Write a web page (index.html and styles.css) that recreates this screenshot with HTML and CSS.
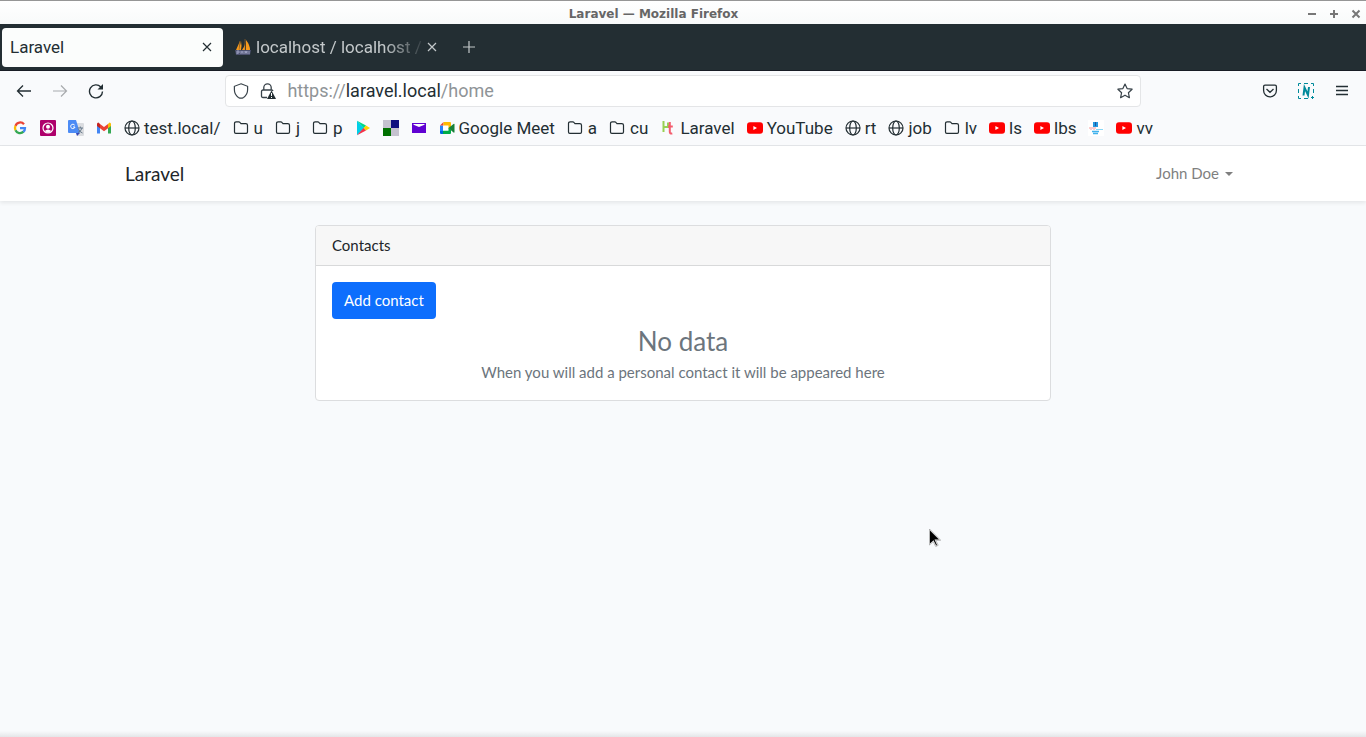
FILE: index.html
```html
<!DOCTYPE html>
<html lang="en">
<head>
<meta charset="utf-8">
<title>Laravel</title>
<link rel="stylesheet" href="styles.css">
</head>
<body>
<svg class="defs" aria-hidden="true">
  <symbol id="folder" viewBox="0 0 16 16"><path d="M1.500 3.500q0-1.700 1.700-1.700h2.600q.7 0 1.100.5l1.100 1.300h4.800q1.700 0 1.700 1.700v6.800q0 1.300-1.300 1.300H2.800q-1.300 0-1.300-1.300z" fill="none" stroke="#232e33" stroke-width="1.200"/></symbol>
  <symbol id="globe" viewBox="0 0 16 16"><g fill="none" stroke="#232e33" stroke-width="1.200"><circle cx="8" cy="8" r="7"/><ellipse cx="8" cy="8" rx="3.300" ry="7"/><path d="M1 8h14"/></g></symbol>
  <symbol id="youtube" viewBox="0 0 16 16"><rect y="2.200" width="16" height="11.500" rx="3" fill="#f00"/><path d="M6.400 6v4L10 8z" fill="#fff"/></symbol>
  <symbol id="close" viewBox="0 0 16 16"><path d="M4 4l8 8M12 4l-8 8" fill="none" stroke="currentColor" stroke-width="1.200"/></symbol>
</svg>

<header class="browser">
  <div class="titlebar">
    <span class="window-title">Laravel — Mozilla Firefox</span>
    <div class="window-controls">
      <button class="window-button" aria-label="Minimize"><svg viewBox="0 0 10 10"><path d="M1 5h8"/></svg></button>
      <button class="window-button" aria-label="Maximize"><svg viewBox="0 0 10 10"><path d="M1 5h8M5 1v8"/></svg></button>
      <button class="window-button" aria-label="Close window"><svg viewBox="0 0 10 10"><path d="M1.500 1.500l7 7M8.500 1.500l-7 7"/></svg></button>
    </div>
  </div>

  <div class="tabs">
    <div class="tab tab-active">
      <span class="tab-title">Laravel</span>
      <button class="icon-button" aria-label="Close tab"><svg class="icon"><use href="#close"/></svg></button>
    </div>
    <div class="tab">
      <svg class="icon" viewBox="0 0 16 16"><path d="M5 2L1 11h3zM6 2q1 5 0 9H4zM10 0q1 6-3 11h3zM11 1q4 5 4 10h-4z" fill="#f79a1c"/><path d="M10 0v11M5 2l-1 9" stroke="#a56a25" stroke-width=".6"/><path d="M0 11h16l-1 5H1z" fill="#4d5270"/><path d="M2 15v-3h2v2H2M6 15v-3M6 13h2M8 12v3M10 15v-3l1 2 1-2v3M14 12v3" stroke="#aeb2d4" stroke-width=".8" fill="none"/></svg>
      <span class="tab-title tab-title-fade">localhost / localhost /</span>
      <button class="icon-button" aria-label="Close tab"><svg class="icon"><use href="#close"/></svg></button>
    </div>
    <button class="icon-button new-tab" aria-label="New tab"><svg class="icon" viewBox="0 0 16 16"><path d="M8 2v12M2 8h12" stroke="currentColor" stroke-width="1.200"/></svg></button>
  </div>

  <div class="toolbar">
    <div class="tools">
      <button class="icon-button" aria-label="Back"><svg class="icon" viewBox="0 0 16 16"><path d="M15 8H1.500M7 2.500L1.500 8 7 13.500" fill="none" stroke="#232e33" stroke-width="1.300"/></svg></button>
      <button class="icon-button" aria-label="Forward" disabled><svg class="icon" viewBox="0 0 16 16"><path d="M1 8h13.500M9 2.500L14.500 8 9 13.500" fill="none" stroke="#a8aaad" stroke-width="1.200"/></svg></button>
      <button class="icon-button" aria-label="Reload"><svg class="icon" viewBox="0 0 16 16"><path d="M12.800 4A6.500 6.500 0 1 0 14.500 8.500" fill="none" stroke="#232e33" stroke-width="1.400"/><path d="M15 1v5.500H9.500z" fill="#232e33"/></svg></button>
    </div>
    <div class="address">
      <svg class="icon" viewBox="0 0 16 16"><path d="M8 .8l6.600 2.500v3.500q0 5-4 7.600Q8 16 5.400 14.400q-4-2.600-4-7.600V3.300z" fill="none" stroke="#39434a" stroke-width="1.200"/></svg>
      <svg class="icon lock" viewBox="0 0 16 16"><path d="M3.800 7V4.500a3.700 3.700 0 0 1 7.400 0V7M7 14.500H3q-1.500 0-1.500-1.500V8.500Q1.500 7 3 7h8.500q1 0 1.500 1" fill="none" stroke="#39434a" stroke-width="1.300"/><path d="M11.500 7.500L16 16H7z" fill="#232e33"/><path d="M11.500 10v3M11.500 14v1" stroke="#fff"/></svg>
      <div class="url" role="textbox" contenteditable="true" spellcheck="false" aria-label="Address">https://<span class="host">laravel.local</span>/home</div>
      <button class="icon-button" aria-label="Bookmark this page"><svg class="icon" viewBox="0 0 16 16"><path d="M8 1l2.100 4.600 5 .6-3.700 3.500 1 5L8 12.200 3.600 14.700l1-5L.9 6.200l5-.6z" fill="none" stroke="#39434a" stroke-width="1.200" stroke-linejoin="round"/></svg></button>
    </div>
    <div class="tools tools-end">
      <button class="icon-button" aria-label="Save to Pocket"><svg class="icon" viewBox="0 0 16 16"><path d="M3 2.200h10q1.400 0 1.400 1.400V7.500a6.400 6.400 0 0 1-12.800 0V3.600Q1.600 2.200 3 2.200zM4.500 6L8 9.300 11.500 6" fill="none" stroke="#232e33" stroke-width="1.300"/></svg></button>
      <button class="icon-button" aria-label="Screenshot extension"><svg class="icon" viewBox="0 0 16 16"><path d="M.5 3V.5H3M6 .5h4M13 .5h2.500V3M15.500 6v4M.5 6v4M.5 13v2.500H3M6 15.500h4M14.500 13v3M13 14.500h3" fill="none" stroke="#008a9b"/><path d="M5.500 12.500l1-8 3.500 7.500 1-8" fill="none" stroke="#008a9b" stroke-width="2"/></svg></button>
      <button class="icon-button" aria-label="Menu"><svg class="icon" viewBox="0 0 16 16"><path d="M2 3.500h12M2 7.500h12M2 11.500h12" stroke="#232e33" stroke-width="1.300"/></svg></button>
    </div>
  </div>

  <nav class="bookmarks" aria-label="Bookmarks">
    <a class="bookmark" href="#" aria-label="Google"><svg class="icon" viewBox="0 0 16 16"><g fill="none" stroke-width="2.300"><path d="M12 4.200A5 5 0 0 0 3.500 5.800" stroke="#ea4335"/><path d="M3.500 5.800a5 5 0 0 0 0 4.400" stroke="#fbbc05"/><path d="M3.500 10.200a5 5 0 0 0 8 1.500" stroke="#34a853"/><path d="M11.300 11.900A4.800 4.800 0 0 0 13 8.100H8" stroke="#4285f4"/></g></svg></a>
    <a class="bookmark" href="#" aria-label="Account"><svg class="icon" viewBox="0 0 16 16"><rect width="16" height="16" rx="1" fill="#ae006b"/><circle cx="8" cy="8" r="5" fill="none" stroke="#fff" stroke-width="1.200"/><circle cx="8" cy="6.800" r="2" fill="#fff"/><path d="M4.700 11q3.300-3 6.600 0L8 13z" fill="#fff"/></svg></a>
    <a class="bookmark" href="#" aria-label="Translate"><svg class="icon" viewBox="0 0 16 16"><path d="M6 3h9q1 0 1 1v11q0 1-1 1H9z" fill="#dadce0"/><path d="M1 0h7l4 13H1q-1 0-1-1V1q0-1 1-1z" fill="#4c8bf5"/><path d="M8 13h4l-3 3z" fill="#3447b8"/><path d="M6.700 5.200A2.200 2.200 0 1 0 7 7H5" fill="none" stroke="#fff"/><path d="M9.500 8H15M12.300 6.500V8M14 8q-1 3.500-4 4.500M10.500 9q1 3 4 4" stroke="#66788a" fill="none"/></svg></a>
    <a class="bookmark" href="#" aria-label="Gmail"><svg class="icon" viewBox="0 0 16 16"><path d="M1 4v9.500h3V6z" fill="#4285f4"/><path d="M12 6v7.500h3V4z" fill="#34a853"/><path d="M4 4l4 3 4-3v4.300L8 11.300 4 8.300z" fill="#ea4335"/><path d="M1 4q0-1.500 1.500-1.500L4 4v4.300L1 6z" fill="#c5221f"/><path d="M15 4q0-1.500-1.500-1.500L12 4v4.300L15 6z" fill="#fbbc04"/></svg></a>
    <a class="bookmark" href="#"><svg class="icon"><use href="#globe"/></svg>test.local/</a>
    <a class="bookmark folder" href="#"><svg class="icon"><use href="#folder"/></svg>u</a>
    <a class="bookmark folder" href="#"><svg class="icon"><use href="#folder"/></svg>j</a>
    <a class="bookmark folder" href="#"><svg class="icon"><use href="#folder"/></svg>p</a>
    <a class="bookmark" href="#" aria-label="Google Play"><svg class="icon" viewBox="0 0 16 16"><path d="M2 .8v14.400L9.500 8z" fill="#00cfe8"/><path d="M2 .8L11 5.500 9 8z" fill="#00d986"/><path d="M11 5.500L15 8l-4 2.500L8.500 8z" fill="#ffd500"/><path d="M2 15.200L8.500 8l2.500 2.500z" fill="#f43249"/></svg></a>
    <a class="bookmark" href="#" aria-label="Palette"><svg class="icon" viewBox="0 0 16 16"><path d="M0 0h16v16H0z" fill="#c5c2cf"/><path d="M8 0h8v8H8z" fill="#10107f"/><path d="M0 8h8v8H0z" fill="#007000"/></svg></a>
    <a class="bookmark" href="#" aria-label="Mail"><svg class="icon" viewBox="0 0 16 16"><path d="M1 3h14v10H1z" fill="#6001d2"/><path d="M2.500 4h11v.8L8 7 2.500 4.800z" fill="#fff"/></svg></a>
    <a class="bookmark" href="#"><svg class="icon" viewBox="0 0 16 16"><path d="M4 5h6v6H4z" fill="#fff"/><path d="M1 5.500h3v5.500H1z" fill="#2684fc"/><path d="M1 5.500L4.500 2v3.500z" fill="#ea4335"/><path d="M4.500 2H11q1 0 1 1v4.500L9.500 9V5.500h-5z" fill="#ffba00"/><path d="M1 11h3.500v3H2q-1 0-1-1z" fill="#0066da"/><path d="M4 10.800h5.500V8L12 9.500V13q0 1-1 1H4z" fill="#00ac47"/><path d="M9.500 8l5-4q1-.5 1 .5v7.500q0 1-1 .5z" fill="#188038"/></svg>Google Meet</a>
    <a class="bookmark folder" href="#"><svg class="icon"><use href="#folder"/></svg>a</a>
    <a class="bookmark folder" href="#"><svg class="icon"><use href="#folder"/></svg>cu</a>
    <a class="bookmark" href="#"><svg class="icon" viewBox="0 0 16 16"><path d="M3.500 1v11M3.500 7H8V2.500" fill="none" stroke="#98d052" stroke-width="2"/><path d="M9.800 2v10q0 2 2.500 1.500M8 6.500h4.800" fill="none" stroke="#f45d6e" stroke-width="2"/></svg>Laravel</a>
    <a class="bookmark" href="#"><svg class="icon"><use href="#youtube"/></svg>YouTube</a>
    <a class="bookmark" href="#"><svg class="icon"><use href="#globe"/></svg>rt</a>
    <a class="bookmark" href="#"><svg class="icon"><use href="#globe"/></svg>job</a>
    <a class="bookmark folder" href="#"><svg class="icon"><use href="#folder"/></svg>lv</a>
    <a class="bookmark" href="#"><svg class="icon"><use href="#youtube"/></svg>ls</a>
    <a class="bookmark" href="#"><svg class="icon"><use href="#youtube"/></svg>lbs</a>
    <a class="bookmark" href="#" aria-label="Help"><svg class="icon" viewBox="0 0 16 16"><path d="M0 0h16v16H0z" fill="#fff"/><path d="M5 2h5v5H5z" fill="#2599df"/><path d="M7 2h1v4H7z" fill="#1c57a0"/><path d="M1 8h7M3 9v1M6 9v1" stroke="#f59a9a"/><path d="M8 9.500h7" stroke="#87d8f8"/><path d="M4 11.500h7M5 13.500h5" stroke="#40b2ed" stroke-width="1.500"/></svg></a>
    <a class="bookmark" href="#"><svg class="icon"><use href="#youtube"/></svg>vv</a>
  </nav>
</header>

<div class="page">
  <nav class="navbar">
    <div class="container">
      <a class="brand" href="#">Laravel</a>
      <button class="user-menu" aria-haspopup="true">John Doe<span class="caret"></span></button>
    </div>
  </nav>
  <main class="content">
    <section class="card">
      <div class="card-header">Contacts</div>
      <div class="card-body">
        <button class="primary-button">Add contact</button>
        <div class="empty">
          <h1 class="empty-title">No data</h1>
          <p class="empty-text">When you will add a personal contact it will be appeared here</p>
        </div>
      </div>
    </section>
  </main>
</div>
<svg class="pointer" viewBox="0 0 12 20" aria-hidden="true"><path d="M.5 1v16l3.700-3.500 2.500 5 2.500-1.200-2.500-5h5z" fill="#fff" stroke="#999" stroke-width=".7"/><path d="M1 2.500v13l3.500-3.200 2.700 5.200.8-.4L5.500 11.500H10z" fill="#000"/></svg>
</body>
</html>
```

FILE: styles.css
```css
* { box-sizing: border-box; }

body {
  margin: 0;
  min-height: 100vh;
  display: flex;
  flex-direction: column;
  background: #f8fafc;
  color: #212529;
  font-family: Roboto, "Liberation Sans", sans-serif;
}

button {
  border: 0;
  padding: 0;
  background: none;
  color: inherit;
  font: inherit;
}

a { color: inherit; text-decoration: none; }

.defs { display: none; }

.icon {
  display: block;
  flex: none;
  width: 16px;
  height: 16px;
}

.icon-button { flex: none; }

.browser { background: #f9fafc; color: #232e33; }

/* Window title */
.titlebar {
  display: flex;
  align-items: center;
  height: 24px;
  padding: 2px 5px 0 0;
  border-top: 1px solid #969696;
  background: linear-gradient(#fff, #f8fafa);
}

.window-title {
  flex: 1;
  color: #666;
  font: bold 12px/20px "DejaVu Sans", sans-serif;
  text-align: center;
}

.window-controls {
  display: flex;
  gap: 12px;
}

.window-button svg {
  display: block;
  width: 10px;
  height: 10px;
  fill: none;
  stroke: #777;
  stroke-width: 2;
}

/* Tabs */
.tabs {
  display: flex;
  align-items: center;
  gap: 4px;
  height: 47px;
  padding: 0 2px;
  border-bottom: 1px solid #181c25;
  background: #232e33;
  color: #c3c8ca;
}

.tab {
  display: flex;
  align-items: center;
  gap: 5px;
  width: 221px;
  height: 39px;
  padding: 0 8px;
  font-size: 17px;
}

.tab-active {
  border-radius: 4px;
  background: #fbfdfc;
  color: #232e33;
}

.tab-title {
  flex: 1;
  white-space: nowrap;
}

.tab-title-fade {
  min-width: 0;
  margin-right: -8px;
  -webkit-mask-image: linear-gradient(to right, #000 75%, transparent);
  mask-image: linear-gradient(to right, #000 75%, transparent);
}

.new-tab { padding: 0 9px; }

/* Navigation toolbar */
.toolbar {
  display: grid;
  grid-template-columns: 1fr 67% 1fr;
  align-items: center;
  height: 40px;
}

.tools { display: flex; gap: 20px; padding: 0 16px; }
.tools-end { justify-content: flex-end; }

.address {
  display: flex;
  align-items: center;
  height: 32px;
  padding: 0 7px;
  border: 1px solid #e4e5e7;
  border-radius: 4px;
  background: #fff;
}

.lock { margin: 0 11px; }

.url {
  flex: 1;
  outline: 0;
  color: #8f9497;
  font-size: 18px;
  line-height: 24px;
}

.host { color: #232e33; }

/* Bookmarks */
.bookmarks {
  display: flex;
  gap: 12px;
  height: 35px;
  padding: 0 12px;
  border-bottom: 1px solid #e4e6e9;
}

.bookmark {
  display: flex;
  align-items: center;
  gap: 4px;
  font-size: 17px;
  white-space: nowrap;
}

.folder { gap: 5px; }

/* Application */
.page {
  flex: 1;
  background: linear-gradient(to top, #e4e6e8, #f8fafc 6px);
  font-family: Lato, sans-serif;
  font-size: 15px;
  line-height: 23px;
}

.navbar {
  background: #fff;
  box-shadow: 0 2px 4px rgba(0, 0, 0, .08);
}

.container {
  display: flex;
  align-items: center;
  justify-content: space-between;
  max-width: 1140px;
  height: 55px;
  margin: 0 auto;
  padding: 0 12px;
}

.brand { font-size: 19px; }
.user-menu { display: flex; align-items: center; padding: 0 8px; color: #7f7f7f; }

.caret {
  margin-left: 6px;
  border: 4px solid transparent;
  border-top-color: currentColor;
  border-bottom: 0;
}

.content { padding: 24px 12px; }

.card {
  max-width: 736px;
  margin: 0 auto;
  border: 1px solid #dcdddf;
  border-radius: 4px;
  background: #fff;
}

.card-header {
  padding: 8px 16px;
  border-bottom: 1px solid #d8d9da;
  border-radius: 3px 3px 0 0;
  background: #f7f7f7;
}

.card-body { padding: 16px; }

.primary-button {
  display: block;
  padding: 7px 12px;
  border-radius: 4px;
  background: #0d6efd;
  color: #fff;
}

.empty {
  padding-top: 8px;
  color: #6c757d;
  text-align: center;
}

.empty-title {
  margin: 0 0 6px;
  font-size: 26px;
  font-weight: 400;
  line-height: 28px;
}

.empty-text { margin: 0; }

.pointer {
  position: absolute;
  top: 528px;
  left: 929px;
  width: 12px;
  height: 20px;
}
```
